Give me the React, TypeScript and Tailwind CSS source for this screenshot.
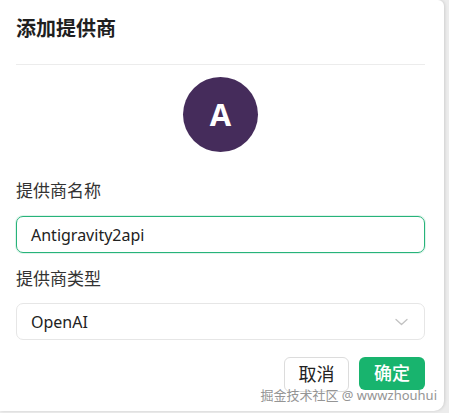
import React from 'react';

const cjk = { fontFamily: '"Noto Sans", "Noto Sans CJK SC", sans-serif' };

export default function App() {
  return (
    <div className="relative h-[413px] w-[449px] overflow-hidden bg-[#ececec]" style={cjk}>
      {/* Dialog panel */}
      <div className="flex h-[411px] w-[444px] flex-col rounded-br-[10px] rounded-tr-[6px] bg-white pl-4 pr-[19px] shadow-[1px_0_3px_rgba(0,0,0,0.12)]">
        <div className="border-b border-[#ececec] pb-[22px] pt-[16px]">
          <h1 className="text-[20px] font-bold leading-[26px] text-[#1f1f1f]">添加提供商</h1>
        </div>

        <div className="mt-[12px] flex justify-center">
          <div className="flex h-[75px] w-[75px] items-center justify-center rounded-full bg-[#452c5b]">
            <span
              className="text-[31px] font-bold leading-none text-white"
              style={{ fontFamily: '"Open Sans", sans-serif' }}
            >
              A
            </span>
          </div>
        </div>

        <label className="mt-[26px] text-[17px] leading-[26px] text-[#333]">提供商名称</label>
        <div className="mt-[12px] flex h-[37px] items-center rounded-[7px] border border-[#27b37a] px-[14px] shadow-[0_0_0_1px_rgba(39,179,122,0.15)]">
          <span className="text-[16px] text-[#222]">Antigravity2api</span>
        </div>

        <label className="mt-[13px] text-[17px] leading-[26px] text-[#333]">提供商类型</label>
        <div className="mt-[11px] flex h-[37px] items-center justify-between rounded-[7px] border border-[#e6e6e6] pl-[14px] pr-[16px]">
          <span className="text-[16px] text-[#222]">OpenAI</span>
          <svg width="13" height="8" viewBox="0 0 13 8" fill="none">
            <path d="M1 1.5l5.5 5 5.5-5" stroke="#c2c2c2" strokeWidth="1.3" strokeLinecap="round" strokeLinejoin="round" />
          </svg>
        </div>

        <div className="mt-[17px] flex justify-end gap-[10px]">
          <button className="h-[35px] w-[65px] rounded-[6px] border border-[#dcdcdc] bg-white text-[18px] text-[#222]">
            取消
          </button>
          <button className="h-[33px] w-[66px] rounded-[6px] bg-[#18b46e] text-[18px] font-medium text-white">
            确定
          </button>
        </div>
      </div>

      {/* Watermark */}
      <div className="absolute bottom-[11px] right-[12px] text-[13px] leading-none text-[#8a8a8a] opacity-90">
        掘金技术社区 @ wwwzhouhui
      </div>
    </div>
  );
}
